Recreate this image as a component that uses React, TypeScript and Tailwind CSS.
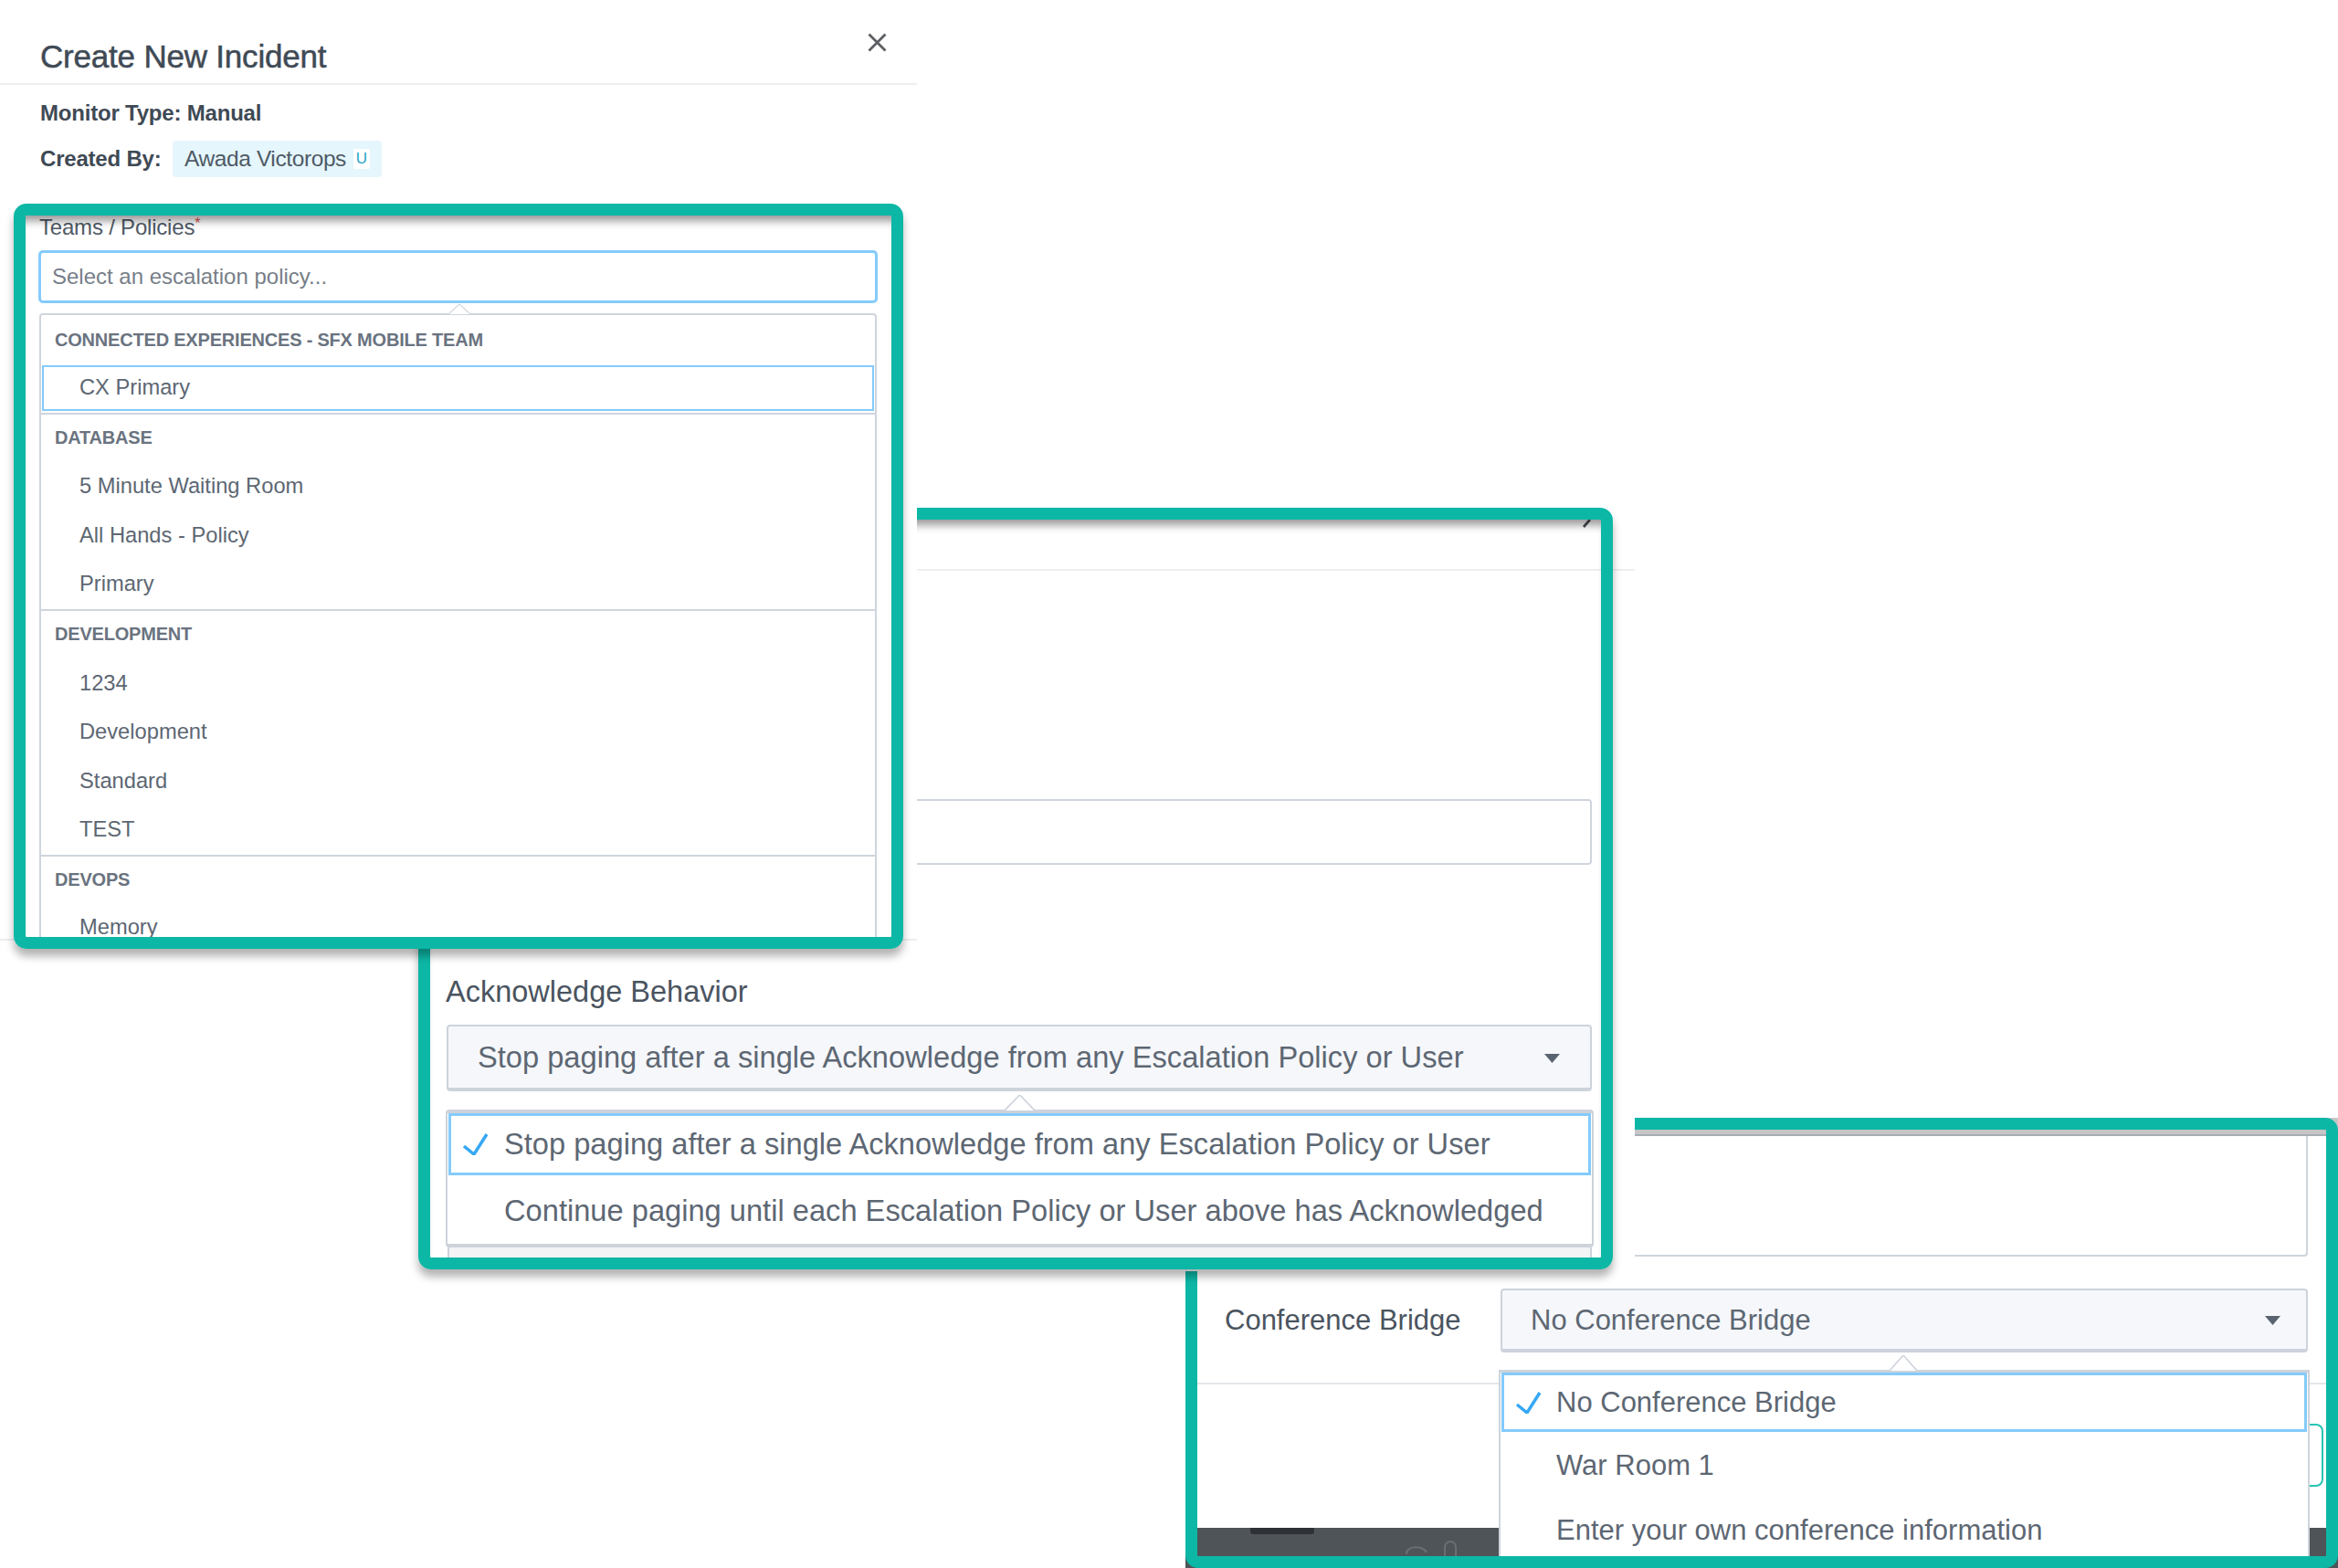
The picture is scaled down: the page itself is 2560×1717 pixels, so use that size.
const SANS = "font-['Liberation_Sans',Arial,sans-serif]";

function Frame({ className }: { className: string }) {
  return (
    <div
      className={
        "pointer-events-none absolute rounded-[14px] border-[13px] border-[#0db7a6] " +
        className
      }
    />
  );
}

function UpCaret({ w, h, className }: { w: number; h: number; className: string }) {
  return (
    <svg width={w} height={h} viewBox="0 0 30 16" preserveAspectRatio="none" className={"absolute " + className}>
      <polygon points="0,16 15,0 30,16" fill="#ffffff" />
      <polyline points="0,16 15,0 30,16" fill="none" stroke="#cdd3db" strokeWidth="1.5" />
    </svg>
  );
}

function Arrow({ className }: { className?: string }) {
  return (
    <svg width="17" height="10" viewBox="0 0 17 10" className={className}>
      <polygon points="0,0 17,0 8.5,10" fill="#5a6470" />
    </svg>
  );
}

function Check({ className }: { className?: string }) {
  return (
    <svg width="29" height="24" viewBox="0 0 29 24" className={className}>
      <polyline points="2,14 13,23 27,1" fill="none" stroke="#36a8f4" strokeWidth="3.5" />
    </svg>
  );
}

function GroupHeader({ children, h }: { children: string; h: string }) {
  return (
    <div className={"flex items-center pl-[15px] text-[20px] font-bold tracking-[-0.2px] text-[#6a7380] " + h}>{children}</div>
  );
}

function Item({ children }: { children: string }) {
  return <div className="flex h-[53.5px] items-center pl-[42px] text-[23.7px] text-[#5d6773]">{children}</div>;
}

function PanelOne() {
  return (
    <div className="absolute top-0 left-0 z-30 h-[1030px] w-[1004px] border-b-2 border-[#eceef0] bg-white">
      <div className="flex h-[93px] items-start justify-between border-b-2 border-[#eeeff1] pt-[42px] pr-[33px] pl-[44px]">
        <div className="text-[35px] leading-[40px] tracking-[-0.2px] text-[#3f4a55] [-webkit-text-stroke:0.5px_#3f4a55]">Create New Incident</div>
        <svg width="21" height="21" viewBox="0 0 21 21" className="-mt-[6px]">
          <path d="M1.5 1.5L19.5 19.5M19.5 1.5L1.5 19.5" stroke="#5b5f63" strokeWidth="2.8" />
        </svg>
      </div>
      <div className="mt-[15px] flex h-[32px] items-center pl-[44px] text-[24px] font-bold tracking-[-0.2px] text-[#3f4a55]">
        Monitor Type: Manual
      </div>
      <div className="mt-[14px] flex h-[40px] items-center pl-[44px]">
        <span className="w-[145px] text-[24px] font-bold tracking-[-0.2px] text-[#3f4a55]">Created By:</span>
        <div className="flex h-[40px] w-[229px] items-center rounded-[4px] bg-[#e5f6fc] pl-[13px]">
          <span className="text-[24.5px] tracking-[-0.4px] text-[#4f5a66]">Awada Victorops</span>
          <span className="ml-[8px] flex h-[22px] w-[18px] items-center justify-center rounded-[2px] bg-white text-[17px] text-[#27a5c9]">U</span>
        </div>
      </div>
      <div className="mt-[40px] flex h-[30px] items-center pl-[43px] text-[24px] tracking-[-0.2px] text-[#4f5a66]">
        Teams / Policies<span className="-mt-[8px] text-[16px] text-[#d9534f]">*</span>
      </div>
      <div className="mt-[10px] ml-[42px] flex h-[58px] w-[919px] items-center rounded-[5px] border-[3px] border-[#84cbfb] pl-[12px] text-[24px] text-[#767e88]">
        Select an escalation policy...
      </div>
      <div className="relative mt-[11px] ml-[43px] h-[688px] w-[917px] rounded-t-[4px] border-x-2 border-t-2 border-[#cfd5dd]">
        <UpCaret w={24} h={11} className="-top-[12px] left-[446px]" />
        <div className="h-full overflow-hidden">
          <GroupHeader h="h-[55px] pb-[2px]">CONNECTED EXPERIENCES - SFX MOBILE TEAM</GroupHeader>
          <div className="mx-px flex h-[50px] items-center border-[2.5px] border-[#84cbfb] pl-[39px] text-[23.7px] text-[#5d6773]">
            CX Primary
          </div>
          <div className="mt-[2px] border-t-2 border-[#cfd5dd]">
            <GroupHeader h="h-[52.5px] pb-[2px]">DATABASE</GroupHeader>
            <Item>5 Minute Waiting Room</Item>
            <Item>All Hands - Policy</Item>
            <Item>Primary</Item>
          </div>
          <div className="border-t-2 border-[#cfd5dd]">
            <GroupHeader h="h-[53px] pb-[3px]">DEVELOPMENT</GroupHeader>
            <Item>1234</Item>
            <Item>Development</Item>
            <Item>Standard</Item>
            <Item>TEST</Item>
          </div>
          <div className="border-t-2 border-[#cfd5dd]">
            <GroupHeader h="h-[51px] pb-[2px]">DEVOPS</GroupHeader>
            <Item>Memory</Item>
          </div>
        </div>
      </div>
      <Frame className="top-[223px] left-[15px] h-[816px] w-[974px] shadow-[0_8px_10px_rgba(0,0,0,0.3),inset_0_12px_10px_-6px_rgba(0,0,0,0.4)]" />
    </div>
  );
}

function PanelTwo() {
  return (
    <div className="absolute top-[556px] left-[458px] z-20 h-[836px] w-[1332px] bg-white">
      <div className="flex h-[69px] items-start justify-end border-b-2 border-[#eeeff1] pr-[48px]">
        <svg width="10" height="10" viewBox="0 0 10 10" className="mt-[12px]">
          <path d="M9 1L2 9" stroke="#4a4f55" strokeWidth="2.8" />
        </svg>
      </div>
      <div className="mt-[250px] ml-[32px] h-[72px] w-[1253px] rounded-[4px] border-2 border-[#cfd5dd]" />
      <div className="mt-[119px] ml-[30px] flex h-[40px] items-center text-[32.5px] text-[#4a5460]">Acknowledge Behavior</div>
      <div className="mt-[16px] ml-[31px] flex h-[73px] w-[1254px] items-center justify-between rounded-[4px] border-2 border-b-[4px] border-[#cdd3db] bg-[#f5f7fa] pt-[2px] pr-[33px] pl-[32px] text-[32.65px] text-[#5d6773]">
        <span>Stop paging after a single Acknowledge from any Escalation Policy or User</span>
        <Arrow />
      </div>
      <div className="relative mt-[20px] ml-[30px] w-[1257px]">
        <UpCaret w={33} h={17} className="-top-[16px] left-[612px]" />
        <div className="h-[151px] rounded-[4px] border-2 border-t-[4px] border-b-[4px] border-[#cdd3db] bg-white">
          <div className="mx-px flex h-[68px] items-center border-[3px] border-[#84cbfb] pl-[12px] text-[32.65px] text-[#5d6773]">
            <Check />
            <span className="ml-[17px] pt-[1px]">Stop paging after a single Acknowledge from any Escalation Policy or User</span>
          </div>
          <div className="flex h-[75px] items-center pt-[3px] pl-[62px] text-[32.65px] text-[#5d6773]">
            Continue paging until each Escalation Policy or User above has Acknowledged
          </div>
        </div>
        <div className="mx-[2px] h-[11px] border-x-2 border-[#cdd3db] bg-[#f3f4f6]" />
      </div>
      <Frame className="top-0 left-0 h-[834px] w-[1308px] shadow-[0_8px_10px_rgba(0,0,0,0.3),inset_0_12px_10px_-6px_rgba(0,0,0,0.4)]" />
    </div>
  );
}

function PanelThree() {
  return (
    <div className="absolute top-[1224px] left-[1298px] z-10 h-[493px] w-[1262px] overflow-hidden bg-white">
      <div className="flex h-full flex-col">
        <div className="h-[20px] border-b-2 border-[#a9adb6] bg-[#c6c6c6]" />
        <div className="ml-[43px] h-[132px] w-[1186px] rounded-b-[4px] border-x-2 border-b-2 border-[#cfd5dd]" />
        <div className="mt-[35px] flex h-[70px] items-center pl-[43px]">
          <span className="w-[302px] text-[31px] text-[#4a5460]">Conference Bridge</span>
          <div className="flex h-[70px] w-[884px] items-center justify-between rounded-[4px] border-2 border-b-[4px] border-[#cdd3db] bg-[#f5f7fa] pt-[2px] pr-[28px] pl-[31px] text-[31px] text-[#5d6773]">
            <span>No Conference Bridge</span>
            <Arrow />
          </div>
        </div>
        <div className="mt-[33px] border-t-2 border-[#e4e6e9]" />
        <div className="mt-[43px] mr-[16px] ml-auto h-[69px] w-[64px] rounded-r-[8px] border-2 border-[#28c4b4]" />
        <div className="mt-[45px] flex-1 bg-[#4f5458]">
          <div className="ml-[71px] h-[7px] w-[70px] rounded-b-[3px] bg-[#2e3236]" />
          <svg width="70" height="24" viewBox="0 0 70 24" className="mt-[6px] ml-[240px]" fill="none" stroke="#6a6f74" strokeWidth="2">
            <path d="M2 16C2 6 20 6 24 14" />
            <path d="M44 24V8a6 6 0 0 1 12 0V24" />
          </svg>
        </div>
      </div>
      <div className="absolute top-[276px] left-[343px] h-[217px] w-[888px] border-x-2 border-t-[3px] border-[#cdd3db] bg-white">
        <UpCaret w={30} h={17} className="-top-[19px] left-[426px]" />
        <div className="mx-px flex h-[65px] items-center border-[3px] border-[#84cbfb] pl-[12px] text-[31px] text-[#5d6773]">
          <Check />
          <span className="ml-[16px] pt-[1px]">No Conference Bridge</span>
        </div>
        <div className="flex h-[73px] items-center pt-[2px] pl-[61px] text-[31px] text-[#5d6773]">War Room 1</div>
        <div className="flex h-[68px] items-center pt-[2px] pl-[61px] text-[31px] text-[#5d6773]">Enter your own conference information</div>
      </div>
      <Frame className="top-0 left-0 h-[493px] w-[1262px]" />
    </div>
  );
}

export default function App() {
  return (
    <div className={"relative h-[1717px] w-[2560px] overflow-hidden bg-white " + SANS}>
      <PanelThree />
      <PanelTwo />
      <PanelOne />
    </div>
  );
}
